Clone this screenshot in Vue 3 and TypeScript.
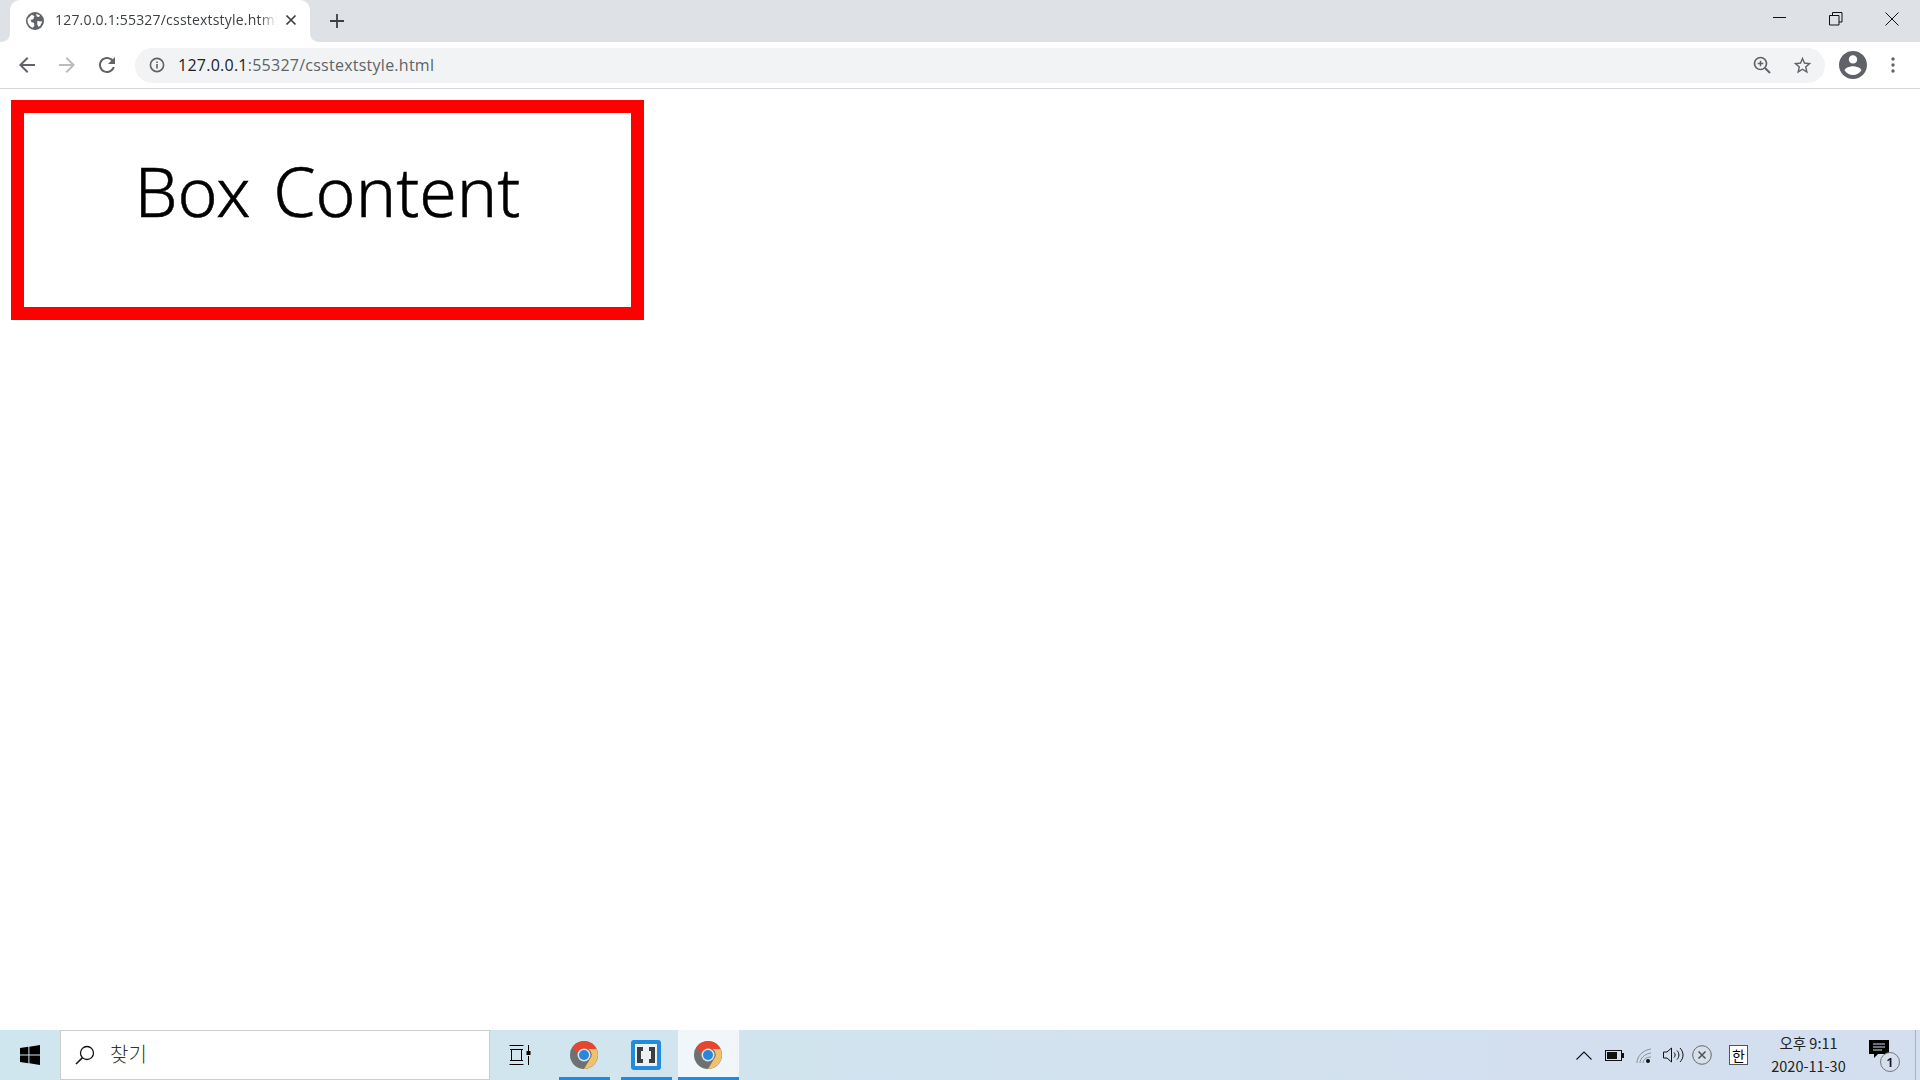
<script setup lang="ts">
interface ChromeIcon { id: number }
const running: ChromeIcon[] = [{ id: 1 }]
</script>

<template>
  <div class="screen">
    <header class="tabstrip">
      <div class="tab">
        <svg class="favicon" viewBox="0 0 16 16" width="18" height="18">
          <circle cx="8" cy="8" r="8" fill="#5f6368" />
          <path d="M1.500 6 5 2.500l2.500 1-1 3-2.500.5 1 2 2 .5.5 3-1.500 1.500C3 13 1 10 1.500 6zM9 1.500l3.500 1.500-1 1.500L9.500 4zM10 8l4.500.5-2 4-1.500.5-1-2z" fill="#fff" />
        </svg>
        <span class="tab-title">127.0.0.1:55327/csstextstyle.html</span>
        <svg class="tab-close" viewBox="0 0 12 12" width="12" height="12">
          <path d="M1.500 1.500l9 9M10.500 1.500l-9 9" stroke="#3c4043" stroke-width="1.700" fill="none" />
        </svg>
      </div>
      <svg class="new-tab" viewBox="0 0 14 14" width="14" height="14">
        <path d="M7 0v14M0 7h14" stroke="#3c4043" stroke-width="1.800" fill="none" />
      </svg>
      <div class="win-controls">
        <svg viewBox="0 0 14 14" width="14" height="14"><path d="M0 5.500h13" stroke="#111" fill="none" /></svg>
        <svg viewBox="0 0 14 14" width="14" height="14"><path d="M.5 3.500h9.500v9.500H.5zM3.500 3.500V.5H13V10h-3" stroke="#111" fill="none" /></svg>
        <svg viewBox="0 0 14 14" width="14" height="14"><path d="M.5.5l13 13M13.500.5l-13 13" stroke="#111" fill="none" /></svg>
      </div>
    </header>

    <nav class="toolbar">
      <svg class="nav back" viewBox="0 0 24 24" width="24" height="24"><path fill="#5f6368" d="M20 11H7.830l5.590-5.590L12 4l-8 8 8 8 1.410-1.410L7.830 13H20v-2z" /></svg>
      <svg class="nav fwd" viewBox="0 0 24 24" width="24" height="24"><path fill="#babcbe" d="M4 11h12.170l-5.590-5.590L12 4l8 8-8 8-1.410-1.410L16.170 13H4v-2z" /></svg>
      <svg class="nav reload" viewBox="0 0 24 24" width="24" height="24"><path fill="#5f6368" d="M17.650 6.350C16.200 4.900 14.210 4 12 4c-4.420 0-7.990 3.580-7.990 8s3.570 8 7.990 8c3.730 0 6.840-2.550 7.730-6h-2.080c-.82 2.330-3.040 4-5.650 4-3.310 0-6-2.690-6-6s2.690-6 6-6c1.660 0 3.140.69 4.220 1.780L13 11h7V4l-2.350 2.350z" /></svg>
      <div class="omnibox">
        <svg class="info" viewBox="0 0 16 16" width="16" height="16">
          <circle cx="8" cy="8" r="6.600" fill="none" stroke="#5f6368" stroke-width="1.600" />
          <path d="M7.200 7h1.600v4.500H7.200zM7.200 4.400h1.600V6H7.200z" fill="#5f6368" />
        </svg>
        <span class="url"><span class="host">127.0.0.1</span>:55327/csstextstyle.html</span>
        <svg class="zoom-icon" viewBox="0 0 18 18" width="18" height="18">
          <circle cx="7.500" cy="7.500" r="6" fill="none" stroke="#5f6368" stroke-width="1.700" />
          <path d="M12 12l5 5" stroke="#5f6368" stroke-width="2" fill="none" />
          <path d="M7.500 4.700v5.600M4.700 7.500h5.600" stroke="#5f6368" stroke-width="1.500" fill="none" />
        </svg>
        <svg class="star" viewBox="0 0 24 24" width="21" height="21"><path fill="#5f6368" d="M22 9.240l-7.190-.62L12 2 9.190 8.630 2 9.240l5.460 4.730L5.820 21 12 17.270 18.180 21l-1.630-7.030L22 9.240zM12 15.400l-3.760 2.270 1-4.280-3.320-2.880 4.380-.38L12 6.100l1.710 4.040 4.380.38-3.320 2.880 1 4.280L12 15.400z" /></svg>
      </div>
      <svg class="avatar" viewBox="2 2 20 20" width="28" height="28"><path fill="#5f6368" d="M12 2C6.480 2 2 6.480 2 12s4.480 10 10 10 10-4.480 10-10S17.520 2 12 2zm0 3c1.660 0 3 1.340 3 3s-1.340 3-3 3-3-1.340-3-3 1.340-3 3-3zm0 14.200c-2.500 0-4.710-1.280-6-3.220.03-1.990 4-3.080 6-3.080 1.990 0 5.970 1.090 6 3.080-1.290 1.940-3.500 3.220-6 3.220z" /></svg>
      <svg class="menu" viewBox="0 0 4 16" width="4" height="16">
        <circle cx="2" cy="2" r="1.700" fill="#5f6368" /><circle cx="2" cy="8" r="1.700" fill="#5f6368" /><circle cx="2" cy="14" r="1.700" fill="#5f6368" />
      </svg>
    </nav>

    <main class="page">
      <div class="box">Box Content</div>
    </main>

    <footer class="taskbar">
      <div class="start">
        <svg viewBox="0 0 20 20" width="20" height="20">
          <path fill="#000" d="M0 3l8.400-1.200v7.700H0zM9.400 1.700L20 0v9.500H9.400zM0 10.500h8.400v7.700L0 17zM9.400 10.500H20V20L9.400 18.300z" />
        </svg>
      </div>
      <div class="search">
        <svg viewBox="0 0 20 20" width="20" height="20">
          <circle cx="12" cy="8" r="6.500" fill="none" stroke="#111" stroke-width="1.300" />
          <path d="M7.500 12.600L1 19" stroke="#111" stroke-width="1.500" fill="none" />
        </svg>
        <span class="search-text">찾기</span>
      </div>
      <div class="task-view">
        <svg viewBox="0 0 22 20" width="22" height="20">
          <path d="M1 .5h13M1 4.500h13M2.500 4.500v11M12.500 4.500v11M1 15.500h13M1 19.500h13M1 0v1M14 0v1M1 19v1M14 19v1M19.500 0v6M19.500 11v9" stroke="#000" fill="none" />
          <rect x="17.500" y="6" width="4" height="4" fill="#000" />
        </svg>
      </div>
      <div class="app first">
        <svg class="chrome" viewBox="0 0 28 28" width="28" height="28">
          <circle cx="14" cy="14" r="14" fill="#6c7272" />
          <path d="M2 7a14 14 0 0 1 24.500 1H14a6.500 6.500 0 0 0-6.200 4.400z" fill="#e8452f" />
          <path d="M26.500 8A14 14 0 0 1 14 28l6-10a6.500 6.500 0 0 0-1.500-10z" fill="#f2c16b" />
          <circle cx="14" cy="14" r="6.500" fill="#dfe6ea" />
          <circle cx="14" cy="14" r="5" fill="#2a85dc" />
        </svg>
      </div>
      <div class="app second">
        <div class="brackets"><div class="brackets-inner"><span class="br left"></span><span class="br right"></span></div></div>
      </div>
      <div class="app third">
        <svg v-for="item in running" :key="item.id" class="chrome" viewBox="0 0 28 28" width="28" height="28">
          <circle cx="14" cy="14" r="14" fill="#6c7272" />
          <path d="M2 7a14 14 0 0 1 24.500 1H14a6.500 6.500 0 0 0-6.200 4.400z" fill="#e8452f" />
          <path d="M26.500 8A14 14 0 0 1 14 28l6-10a6.500 6.500 0 0 0-1.500-10z" fill="#f2c16b" />
          <circle cx="14" cy="14" r="6.500" fill="#dfe6ea" />
          <circle cx="14" cy="14" r="5" fill="#2a85dc" />
        </svg>
      </div>
      <div class="tray">
        <svg class="t-chev" viewBox="0 0 16 9" width="16" height="9"><path d="M.5 8.500L8 1l7.500 7.500" stroke="#111" stroke-width="1.100" fill="none" /></svg>
        <svg class="t-batt" viewBox="0 0 20 11" width="20" height="11">
          <rect x=".5" y=".5" width="16" height="10" fill="none" stroke="#111" />
          <rect x="2" y="2" width="10" height="7" fill="#111" />
          <rect x="17" y="3" width="2" height="5" fill="#111" />
        </svg>
        <svg class="t-wifi" viewBox="0 0 17 16" width="17" height="16">
          <path d="M1 15C1 8 7 2 15 1M4 15c0-5 5-9 11-10M7 15c0-3 3-6 8-6" stroke="#8b9096" stroke-width="1" fill="none" />
          <circle cx="12" cy="13" r="2" fill="#111" />
        </svg>
        <svg class="t-vol" viewBox="0 0 21 16" width="21" height="16">
          <path d="M.5 5h3.500L8.500 1v14L4 11H.5zM11 5.500c1.500 1.500 1.500 3.500 0 5M14 3.500c2.500 2.500 2.500 6.500 0 9M17 1c4 4 4 10 0 14" stroke="#111" fill="none" />
        </svg>
        <svg class="t-x" viewBox="0 0 20 20" width="20" height="20">
          <circle cx="10" cy="10" r="9.300" fill="#d6dfec" stroke="#666" />
          <path d="M6.500 6.500l7 7M13.500 6.500l-7 7" stroke="#555" stroke-width="1.600" fill="none" />
        </svg>
        <div class="t-ime">한</div>
        <div class="t-clock">
          <span>오후 9:11</span>
          <span>2020-11-30</span>
        </div>
        <div class="t-notify">
          <svg viewBox="0 0 21 19" width="21" height="19">
            <path d="M0 0h20v14H9l-4 4v-4H0z" fill="#000" />
            <path d="M4 4h12M4 7h12M4 10h9" stroke="#d3dfee" fill="none" />
          </svg>
          <span class="badge">1</span>
        </div>
      </div>
    </footer>
  </div>
</template>

<style scoped>
.screen {
  width: 1920px;
  height: 1080px;
  display: flex;
  flex-direction: column;
  overflow: hidden;
  background: #fff;
  font-family: "Noto Sans", "Noto Sans CJK KR", sans-serif;
}
.tabstrip {
  height: 42px;
  flex: none;
  background: #dee1e6;
  display: flex;
  align-items: flex-start;
  padding-left: 10px;
}
.tab {
  width: 300px;
  height: 42px;
  background: #fff;
  border-radius: 10px 10px 0 0;
  display: flex;
  align-items: center;
  padding: 0 11px 0 16px;
  box-sizing: border-box;
  position: relative;
}
.tab::before,
.tab::after {
  content: "";
  position: absolute;
  bottom: 0;
  width: 8px;
  height: 8px;
}
.tab::before {
  left: -8px;
  background: radial-gradient(circle at 0 0, #dee1e6 7.500px, #fff 8px);
}
.tab::after {
  right: -8px;
  background: radial-gradient(circle at 100% 0, #dee1e6 7.500px, #fff 8px);
}
.favicon { flex: none; margin-top: -1px; }
.tab-title {
  margin-left: 11px;
  width: 222px;
  flex: none;
  font: 14px/18px "Open Sans", sans-serif;
  letter-spacing: 0.2px;
  color: #3c4043;
  white-space: nowrap;
  overflow: hidden;
  margin-top: -2px;
  -webkit-mask-image: linear-gradient(90deg, #000 92%, transparent);
  mask-image: linear-gradient(90deg, #000 92%, transparent);
}
.tab-close { margin-left: 8px; margin-top: -2px; flex: none; }
.new-tab { margin: 14px 0 0 20px; flex: none; }
.win-controls {
  margin-left: auto;
  display: flex;
  gap: 42px;
  padding: 12px 21px 0 0;
}
.toolbar {
  height: 47px;
  flex: none;
  box-sizing: border-box;
  border-bottom: 1px solid #d4d6d9;
  background: #fff;
  display: flex;
  align-items: center;
  padding: 0 26px 0 15px;
}
.nav { flex: none; }
.fwd { margin-left: 16px; }
.reload { margin-left: 16px; }
.omnibox {
  margin-left: 16px;
  width: 1690px;
  height: 35px;
  flex: none;
  box-sizing: border-box;
  border-radius: 18px;
  background: #f1f3f4;
  display: flex;
  align-items: center;
  padding: 0 12px 0 14px;
}
.info { flex: none; }
.url {
  margin-left: 13px;
  font: 16px/20px "Open Sans", sans-serif;
  letter-spacing: 0.25px;
  color: #5f6368;
}
.host { color: #202124; }
.zoom-icon { margin-left: auto; flex: none; }
.star { margin-left: 21px; flex: none; }
.avatar { margin-left: 14px; flex: none; }
.menu { margin-left: 24px; flex: none; }
.page {
  flex: 1;
  min-height: 0;
  padding: 11px 0 0 11px;
}
.box {
  width: 633px;
  height: 220px;
  box-sizing: border-box;
  border: 13px solid #f00;
  text-align: center;
  font: 350 68px/96px "Noto Sans", sans-serif;
  word-spacing: 5px;
  -webkit-text-stroke: 0.5px #000;
  color: #000;
  padding-top: 30px;
}
.taskbar {
  height: 50px;
  flex: none;
  display: flex;
  align-items: stretch;
  background: linear-gradient(90deg, #d0e6ef 0%, #d0e5ee 35%, #d3dfee 80%);
}
.start {
  width: 60px;
  flex: none;
  display: flex;
  align-items: center;
  justify-content: center;
}
.search {
  width: 430px;
  flex: none;
  box-sizing: border-box;
  background: #fff;
  border: 1px solid #ccc;
  display: flex;
  align-items: center;
  padding-left: 14px;
}
.search-text {
  margin: -3px 0 0 15px;
  font: 20px/24px "Noto Sans CJK KR", sans-serif;
  font-weight: 300;
  color: #333;
}
.task-view {
  width: 69px;
  flex: none;
  display: flex;
  align-items: center;
  justify-content: center;
  padding-right: 10px;
  box-sizing: border-box;
}
.app {
  flex: none;
  display: flex;
  align-items: center;
  justify-content: center;
  box-sizing: border-box;
  border-bottom: 3px solid #2289dd;
  padding: 3px 2px 0 0;
}
.first { width: 51px; }
.second { width: 51px; margin-left: 11px; }
.third { width: 61px; margin-left: 6px; background: #f0f6f9; }
.brackets {
  width: 30px;
  height: 30px;
  border-radius: 3px;
  background: #228bdd;
  display: flex;
  align-items: center;
  justify-content: center;
}
.brackets-inner {
  width: 22px;
  height: 22px;
  background: #eef1f3;
  display: flex;
  align-items: center;
  justify-content: space-between;
  padding: 0 2px;
  box-sizing: border-box;
}
.br {
  width: 6px;
  height: 16px;
  border: 4px solid #3a3f44;
  box-sizing: border-box;
}
.br.left { border-right: 0; }
.br.right { border-left: 0; }
.tray {
  margin-left: auto;
  display: flex;
  align-items: center;
  padding-right: 20px;
  position: relative;
}
.t-batt { margin-left: 13px; }
.t-wifi { margin-left: 11px; margin-top: 2px; }
.t-vol { margin-left: 10px; }
.t-x { margin-left: 8px; }
.t-ime {
  margin-left: 17px;
  width: 19px;
  height: 20px;
  box-sizing: border-box;
  border: 1px solid #555;
  background: #fff;
  font: 14px/18px "Noto Sans CJK KR", sans-serif;
  color: #000;
  text-align: center;
}
.t-clock {
  margin: -2px 0 0 21px;
  width: 79px;
  display: flex;
  flex-direction: column;
  align-items: center;
  gap: 2px;
  font: 14.500px/21px "Noto Sans CJK KR", "Noto Sans", sans-serif;
  color: #222;
  white-space: nowrap;
}
.t-notify {
  margin-left: 21px;
  width: 31px;
  height: 30px;
  position: relative;
}
.t-notify svg { display: block; }
.badge {
  position: absolute;
  right: 0;
  bottom: -2px;
  width: 20px;
  height: 20px;
  border-radius: 50%;
  border: 1px solid #777;
  box-sizing: border-box;
  background: #d3dfee;
  font: 600 13px/18px "Noto Sans", sans-serif;
  text-align: center;
  color: #111;
}
.tray::after {
  content: "";
  position: absolute;
  right: 4px;
  top: 0;
  bottom: 0;
  width: 1px;
  background: #aab4c0;
}
</style>
